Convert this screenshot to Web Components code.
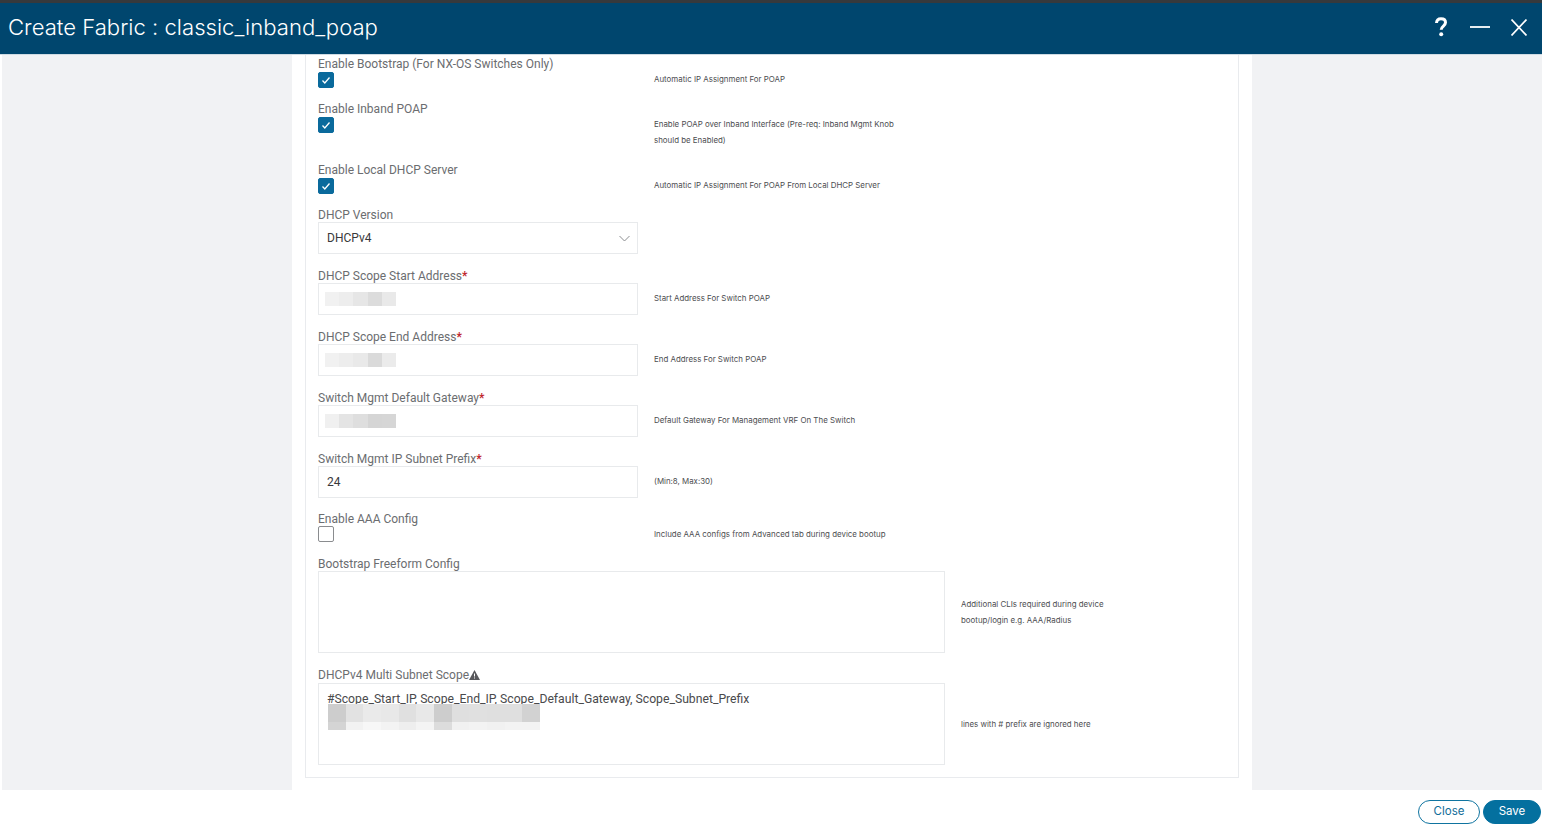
<!DOCTYPE html>
<html>
<head>
<meta charset="utf-8">
<title>Create Fabric</title>
<style>
  html, body { margin: 0; height: 100%; background: #fff; overflow: hidden; }
  body { font-family: "Roboto", "Liberation Sans", sans-serif; color: #58585b; }
</style>
</head>
<body>
<fabric-dialog heading="Create Fabric : classic_inband_poap">
  <form-row label="Enable Bootstrap (For NX-OS Switches Only)" hint="Automatic IP Assignment For POAP"><check-box checked></check-box></form-row>
  <form-row label="Enable Inband POAP" hint="Enable POAP over Inband Interface (Pre-req: Inband Mgmt Knob should be Enabled)"><check-box checked></check-box></form-row>
  <form-row label="Enable Local DHCP Server" hint="Automatic IP Assignment For POAP From Local DHCP Server"><check-box checked></check-box></form-row>
  <form-row label="DHCP Version" center><select-box value="DHCPv4"></select-box></form-row>
  <form-row label="DHCP Scope Start Address" required center hint="Start Address For Switch POAP"><text-box><blur-patch shades="#f1f1f1 #ededed #e6e6e6 #dcdcdc #e9e9e9"></blur-patch></text-box></form-row>
  <form-row label="DHCP Scope End Address" required center hint="End Address For Switch POAP"><text-box><blur-patch shades="#f1f1f1 #ededed #e9e9e9 #dadada #ebebeb"></blur-patch></text-box></form-row>
  <form-row label="Switch Mgmt Default Gateway" required center hint="Default Gateway For Management VRF On The Switch"><text-box><blur-patch shades="#f0f0f0 #e4e4e4 #dedede #d5d5d5 #d6d6d6"></blur-patch></text-box></form-row>
  <form-row label="Switch Mgmt IP Subnet Prefix" required center hint="(Min:8, Max:30)" style="margin-bottom:12px"><text-box>24</text-box></form-row>
  <form-row label="Enable AAA Config" hint="Include AAA configs from Advanced tab during device bootup"><check-box flush></check-box></form-row>
  <form-row label="Bootstrap Freeform Config" center wide hint="Additional CLIs required during device bootup/login e.g. AAA/Radius"><text-area></text-area></form-row>
  <form-row label="DHCPv4 Multi Subnet Scope" warn center wide hint="lines with # prefix are ignored here"><text-area style="margin-top:1px">#Scope_Start_IP, Scope_End_IP, Scope_Default_Gateway, Scope_Subnet_Prefix<scope-patch></scope-patch></text-area></form-row>
</fabric-dialog>

<script>
class FabricDialog extends HTMLElement {
  constructor() {
    super();
    this.attachShadow({ mode: "open" });
    this.shadowRoot.innerHTML = `
      <style>
        :host { display: flex; flex-direction: column; height: 831px; border-top: 3px solid #36393c; box-sizing: border-box; }
        header { flex: none; box-sizing: border-box; height: 52px; background: #00466e; border-bottom: 1px solid #cfdbe3; display: flex; align-items: center; padding: 0 15px 3px 8px; color: #fff; }
        h1 { flex: 1; margin: 0; font: 300 22.1px/1 "Inter", "Liberation Sans", sans-serif; }
        .actions { display: flex; align-items: center; }
        .help { margin-right: 23px; }
        .min { margin-right: 21px; }
        main { flex: none; height: 735px; display: flex; padding-left: 2px; overflow: hidden; }
        .side { flex: none; width: 290px; background: #f1f2f4; }
        .panel { flex: none; box-sizing: border-box; width: 934px; height: 723px; margin: 0 13px; padding: 0 0 0 12px; border: 1px solid #e9ebee; border-top: 0; }
        footer { flex: 1; display: flex; justify-content: flex-end; align-items: flex-start; gap: 3px; padding: 10px 1px 0 0; }
        button { box-sizing: border-box; height: 24px; border-radius: 12px; font: 11.5px/1 "Inter", "Liberation Sans", sans-serif; padding: 0; }
        .close { width: 62px; background: #fff; border: 1px solid #0f74a0; color: #0f6d99; }
        .save { width: 58px; background: #04709f; border: 1px solid #04709f; color: #fff; }
      </style>
      <header>
        <h1>${this.getAttribute("heading")}</h1>
        <div class="actions">
          <svg class="help" width="12" height="20" viewBox="0 0 12 20" fill="none" stroke="#fff" stroke-width="3"><path d="M1.500 6C1.700 3.200 3.400 1.800 6 1.800c2.700 0 4.500 1.500 4.500 3.800 0 3.300-4.300 3.600-4.300 7.100"/><circle cx="6.200" cy="17.300" r="2" fill="#fff" stroke="none"/></svg>
          <svg class="min" width="20" height="20" viewBox="0 0 20 20" stroke="#fff" stroke-width="1.800"><path d="M0 10h20"/></svg>
          <svg width="16" height="17" viewBox="0 0 16 17" fill="none" stroke="#fff" stroke-width="1.700"><path d="M.5 .5l15 16M15.500 .5l-15 16"/></svg>
        </div>
      </header>
      <main>
        <div class="side"></div>
        <div class="panel"><slot></slot></div>
        <div class="side"></div>
      </main>
      <footer>
        <button class="close">Close</button>
        <button class="save">Save</button>
      </footer>`;
  }
}

class FormRow extends HTMLElement {
  constructor() {
    super();
    this.attachShadow({ mode: "open" });
    const star = this.hasAttribute("required") ? '<b>*</b>' : "";
    const warn = this.hasAttribute("warn")
      ? '<svg width="11" height="10" viewBox="0 0 11 10"><path d="M5.500 0L11 10H0z" fill="#58585b"/><path d="M5.500 3.500v3M5.500 7.500v1" stroke="#fff"/></svg>'
      : "";
    const hint = this.getAttribute("hint") || "";
    this.shadowRoot.innerHTML = `
      <style>
        :host { display: block; margin-bottom: 13px; }
        label { display: flex; align-items: center; box-sizing: border-box; height: 16px; padding-top: 2px; font-size: 12px; line-height: 14px; color: #6b6d70; white-space: nowrap; }
        b { color: #c0272d; font-weight: 700; }
        .body { display: grid; grid-template-columns: 320px 250px; column-gap: 16px; align-items: start; }
        :host([wide]) .body { grid-template-columns: 627px 160px; }
        :host([center]) .body { align-items: center; }
        .hint { font: 7.900px/16px "Inter", "Liberation Sans", sans-serif; color: #4c4d50; }
        :host([center]:not([wide])) .hint { margin-bottom: 2px; }
      </style>
      <label>${this.getAttribute("label")}${star}${warn}</label>
      <div class="body"><div><slot></slot></div><div class="hint">${hint}</div></div>`;
  }
}

class CheckBox extends HTMLElement {
  constructor() {
    super();
    this.attachShadow({ mode: "open" });
    this.shadowRoot.innerHTML = `
      <style>
        :host { display: block; box-sizing: border-box; width: 16px; height: 16px; margin: 1px 0 -1px; border: 1px solid #8a8c8f; border-radius: 2px; background: #fff; }
        :host([flush]) { margin: 0; }
        :host([checked]) { border-color: #0a6a9c; background: #0a6a9c; }
        svg { display: block; }
      </style>
      ${this.hasAttribute("checked") ? '<svg width="14" height="14" viewBox="0 0 14 14" fill="none" stroke="#fff" stroke-width="1.300"><path d="M3.500 7.500l2.300 2.500 4.700-5.500"/></svg>' : ""}`;
  }
}

class TextBox extends HTMLElement {
  constructor() {
    super();
    this.attachShadow({ mode: "open" });
    this.shadowRoot.innerHTML = `
      <style>
        :host { display: flex; align-items: center; box-sizing: border-box; width: 320px; height: 32px; padding: 0 8px; border: 1px solid #e8eaec; font-size: 12px; color: #39393b; }
      </style>
      <slot></slot>`;
  }
}

class SelectBox extends HTMLElement {
  constructor() {
    super();
    this.attachShadow({ mode: "open" });
    this.shadowRoot.innerHTML = `
      <style>
        :host { display: flex; align-items: center; justify-content: space-between; box-sizing: border-box; width: 320px; height: 32px; padding: 0 7px 0 8px; border: 1px solid #e8eaec; font-size: 12px; color: #39393b; }
      </style>
      <span>${this.getAttribute("value")}</span>
      <svg width="11" height="7" viewBox="0 0 11 7" fill="none" stroke="#8b8d90"><path d="M.5 1l5 5 5-5"/></svg>`;
  }
}

class TextArea extends HTMLElement {
  constructor() {
    super();
    this.attachShadow({ mode: "open" });
    this.shadowRoot.innerHTML = `
      <style>
        :host { display: block; box-sizing: border-box; width: 627px; height: 82px; padding: 7px 8px; border: 1px solid #e8eaec; font-size: 12.200px; line-height: 16px; color: #4a4a4c; }
      </style>
      <slot></slot>`;
  }
}

// greyed out addresses, the reference has them pixelated
class BlurPatch extends HTMLElement {
  constructor() {
    super();
    this.attachShadow({ mode: "open" });
    const shades = this.getAttribute("shades").split(" ");
    this.shadowRoot.innerHTML = `
      <style>
        :host { display: flex; width: 71px; height: 14px; margin-left: -2px; }
        i { flex: 1; }
      </style>
      ${shades.map((c) => `<i style="background:${c}"></i>`).join("")}`;
  }
}

class ScopePatch extends HTMLElement {
  constructor() {
    super();
    this.attachShadow({ mode: "open" });
    const top = ["#cdcdcd", "#e2e2e2", "#eaeaea", "#e8e8e8", "#e0e0e0", "#e8e8e8", "#cdcdcd", "#dfdfdf", "#e0e0e0", "#dfdfdf", "#dfdfdf", "#d2d2d2"];
    const low = ["#d4d4d4", "#f2f2f2", "#f7f7f7", "#f3f3f3", "#eeeeee", "#f4f4f4", "#dcdcdc", "#f1f1f1", "#f3f3f3", "#f1f1f1", "#f3f3f3", "#f3f3f3"];
    const cells = (list, cls) => `<div class="${cls}">${list.map((c) => `<i style="background:${c}"></i>`).join("")}</div>`;
    this.shadowRoot.innerHTML = `
      <style>
        :host { display: block; width: 212px; margin: -3px 0 0 1px; }
        div { display: flex; }
        .top { height: 18px; }
        .low { height: 8px; }
        i { flex: 1; }
      </style>
      ${cells(top, "top")}${cells(low, "low")}`;
  }
}

customElements.define("fabric-dialog", FabricDialog);
customElements.define("form-row", FormRow);
customElements.define("check-box", CheckBox);
customElements.define("text-box", TextBox);
customElements.define("select-box", SelectBox);
customElements.define("text-area", TextArea);
customElements.define("blur-patch", BlurPatch);
customElements.define("scope-patch", ScopePatch);
</script>
</body>
</html>
